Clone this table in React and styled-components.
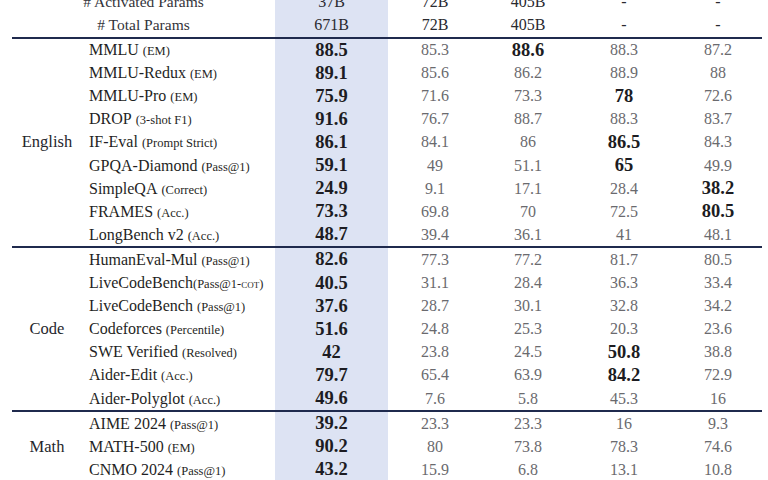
import styled, { createGlobalStyle } from "styled-components";

const GlobalStyle = createGlobalStyle`
  html, body {
    margin: 0;
    padding: 0;
    background: #ffffff;
    overflow: hidden;
  }
  body {
    font-family: "Liberation Serif", "DejaVu Serif", serif;
    color: #1f1f24;
  }
`;

const COLS = "193px 113px 94px 92px 100px 88px";
const ROW_H = "23.1px";

const Table = styled.div`
  width: 750px;
  margin: -9.65px 0 0 12px;
`;

const HeaderRow = styled.div`
  display: grid;
  grid-template-columns: 263px 113px 94px 92px 100px 88px;
  height: ${ROW_H};
  align-items: center;
`;

const HeaderLabel = styled.div`
  text-align: center;
  font-size: 15.5px;
  color: #33333a;
`;

const Group = styled.div`
  display: grid;
  grid-template-columns: 70px 680px;
  border-top: 2px solid #1f2a4d;
`;

const Category = styled.div`
  display: flex;
  align-items: center;
  justify-content: center;
  font-size: 16.5px;
  color: #26262c;
`;

const Row = styled.div`
  display: grid;
  grid-template-columns: ${COLS};
  height: ${ROW_H};
  align-items: center;
`;

const Name = styled.div`
  padding-left: 7px;
  font-size: 16px;
  white-space: nowrap;
  color: #1f1f24;
`;

const Metric = styled.span`
  font-size: 12.5px;
  margin-left: ${(props) => (props.tight ? "0" : "4px")};
`;

const SmallCaps = styled.span`
  font-variant: small-caps;
`;

const Value = styled.div`
  height: 100%;
  display: flex;
  align-items: center;
  justify-content: center;
  background: ${(props) => (props.highlight ? "#dde3f3" : "transparent")};
  font-size: ${(props) => (props.bold ? "18.5px" : "16px")};
  font-weight: ${(props) => (props.bold ? 700 : 400)};
  color: ${(props) => (props.bold ? "#1c1c22" : props.header ? "#2a2a30" : "#6a6a6e")};
`;

const header = [
  ["# Activated Params", ["37B", "72B", "405B", "-", "-"]],
  ["# Total Params", ["671B", "72B", "405B", "-", "-"]],
];

// values prefixed with * are bold in the source table
const groups = [
  {
    name: "English",
    rows: [
      ["MMLU", "(EM)", ["88.5", "85.3", "*88.6", "88.3", "87.2"]],
      ["MMLU-Redux", "(EM)", ["89.1", "85.6", "86.2", "88.9", "88"]],
      ["MMLU-Pro", "(EM)", ["75.9", "71.6", "73.3", "*78", "72.6"]],
      ["DROP", "(3-shot F1)", ["91.6", "76.7", "88.7", "88.3", "83.7"]],
      ["IF-Eval", "(Prompt Strict)", ["86.1", "84.1", "86", "*86.5", "84.3"]],
      ["GPQA-Diamond", "(Pass@1)", ["59.1", "49", "51.1", "*65", "49.9"]],
      ["SimpleQA", "(Correct)", ["24.9", "9.1", "17.1", "28.4", "*38.2"]],
      ["FRAMES", "(Acc.)", ["73.3", "69.8", "70", "72.5", "*80.5"]],
      ["LongBench v2", "(Acc.)", ["48.7", "39.4", "36.1", "41", "48.1"]],
    ],
  },
  {
    name: "Code",
    rows: [
      ["HumanEval-Mul", "(Pass@1)", ["82.6", "77.3", "77.2", "81.7", "80.5"]],
      ["LiveCodeBench", "cot", ["40.5", "31.1", "28.4", "36.3", "33.4"]],
      ["LiveCodeBench", "(Pass@1)", ["37.6", "28.7", "30.1", "32.8", "34.2"]],
      ["Codeforces", "(Percentile)", ["51.6", "24.8", "25.3", "20.3", "23.6"]],
      ["SWE Verified", "(Resolved)", ["42", "23.8", "24.5", "*50.8", "38.8"]],
      ["Aider-Edit", "(Acc.)", ["79.7", "65.4", "63.9", "*84.2", "72.9"]],
      ["Aider-Polyglot", "(Acc.)", ["49.6", "7.6", "5.8", "45.3", "16"]],
    ],
  },
  {
    name: "Math",
    rows: [
      ["AIME 2024", "(Pass@1)", ["39.2", "23.3", "23.3", "16", "9.3"]],
      ["MATH-500", "(EM)", ["90.2", "80", "73.8", "78.3", "74.6"]],
      ["CNMO 2024", "(Pass@1)", ["43.2", "15.9", "6.8", "13.1", "10.8"]],
    ],
  },
];

const BenchName = ({ name, metric }) => (
  <Name>
    {name}
    {metric === "cot" ? (
      <Metric tight>
        (Pass@1-<SmallCaps>cot</SmallCaps>)
      </Metric>
    ) : (
      <Metric>{metric}</Metric>
    )}
  </Name>
);

const App = () => {
  return (
    <>
      <GlobalStyle />
      <Table>
        {header.map(([label, vals]) => (
          <HeaderRow key={label}>
            <HeaderLabel>{label}</HeaderLabel>
            {vals.map((v, i) => (
              <Value key={i} header highlight={i === 0}>
                {v}
              </Value>
            ))}
          </HeaderRow>
        ))}
        {groups.map((group) => (
          <Group key={group.name}>
            <Category>{group.name}</Category>
            <div>
              {group.rows.map(([name, metric, vals], r) => (
                <Row key={r}>
                  <BenchName name={name} metric={metric} />
                  {vals.map((v, i) => {
                    const bold = i === 0 || v.startsWith("*");
                    return (
                      <Value key={i} bold={bold} highlight={i === 0}>
                        {v.replace("*", "")}
                      </Value>
                    );
                  })}
                </Row>
              ))}
            </div>
          </Group>
        ))}
      </Table>
    </>
  );
};

export default App;
